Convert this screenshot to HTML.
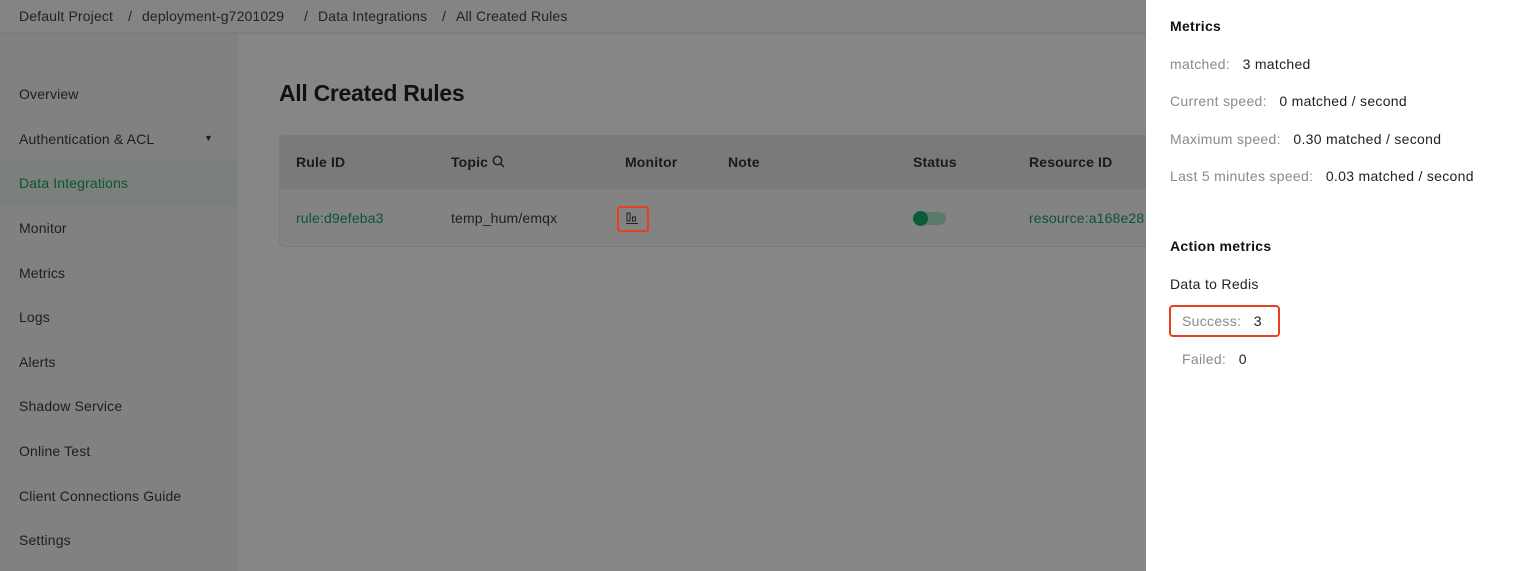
<!DOCTYPE html>
<html><head><meta charset="utf-8"><style>
*{margin:0;padding:0;box-sizing:border-box}
body{width:1536px;height:571px;overflow:hidden;background:#868686;font-family:"Liberation Sans",sans-serif;color:#1e1e1e;position:relative;font-size:14px;letter-spacing:.15px}
.hdr{position:absolute;left:0;top:0;width:1146px;height:33px;background:#848484;border-bottom:1px solid #7c7c7c;box-shadow:0 1px 3px rgba(0,0,0,.08)}
.hdr span{position:absolute;top:8px;font-size:14px;color:#222}
.side{position:absolute;left:0;top:34px;width:238px;height:537px;background:#818181}
.side div{position:absolute;left:19px;font-size:14px;color:#1e1e1e}
.act{position:absolute;left:0;top:127px;width:238px;height:45px;background:#7b807d}
h1{position:absolute;left:279px;top:80px;font-size:23px;font-weight:bold;color:#111;letter-spacing:-.3px}
.tbl{position:absolute;left:279px;top:135px;width:880px;height:112px;border:1px solid #7a7a7a;border-radius:6px;overflow:hidden;background:#838383}
.th{position:absolute;left:0;top:0;width:100%;height:53px;background:#7a7a7a}
.c{position:absolute;font-size:14px}
.b{font-weight:bold;color:#1a1a1a}
.g{color:#0b5434}
.panel{position:absolute;left:1146px;top:0;width:390px;height:571px;background:#fff;letter-spacing:.3px}
.panel div{position:absolute;left:24px;font-size:14px;color:#222}
.l{color:#8a8a8a}
</style></head><body>
<div class="hdr">
<span style="left:19px">Default Project</span>
<span style="left:128px">/</span>
<span style="left:142px">deployment-g7201029</span>
<span style="left:304px">/</span>
<span style="left:318px">Data Integrations</span>
<span style="left:442px">/</span>
<span style="left:456px">All Created Rules</span>
</div>
<div class="side">
<div class="act" style="left:0"></div>
<div style="top:52px">Overview</div>
<div style="top:97px">Authentication &amp; ACL</div>
<div style="left:204px;top:99px;font-size:9px">▼</div>
<div style="top:141px;color:#0b5434">Data Integrations</div>
<div style="top:186px">Monitor</div>
<div style="top:231px">Metrics</div>
<div style="top:275px">Logs</div>
<div style="top:320px">Alerts</div>
<div style="top:364px">Shadow Service</div>
<div style="top:409px">Online Test</div>
<div style="top:454px">Client Connections Guide</div>
<div style="top:498px">Settings</div>
</div>
<h1>All Created Rules</h1>
<div class="tbl">
<div class="th"></div>
<div class="c b" style="left:16px;top:18px">Rule ID</div>
<div class="c b" style="left:171px;top:18px">Topic <svg width="13" height="13" viewBox="0 0 13 13" style="vertical-align:-1px"><circle cx="5.5" cy="5.5" r="4.2" fill="none" stroke="#1a1a1a" stroke-width="1.4"/><path d="M8.6 8.6L12 12" stroke="#1a1a1a" stroke-width="1.5"/></svg></div>
<div class="c b" style="left:345px;top:18px">Monitor</div>
<div class="c b" style="left:448px;top:18px">Note</div>
<div class="c b" style="left:633px;top:18px">Status</div>
<div class="c b" style="left:749px;top:18px">Resource ID</div>
<div class="c g" style="left:16px;top:74px">rule:d9efeba3</div>
<div class="c" style="left:171px;top:74px">temp_hum/emqx</div>
<div style="position:absolute;left:337px;top:70px;width:32px;height:26px;border:2px solid #e8401c;border-radius:3px"></div>
<svg style="position:absolute;left:345px;top:75px" width="14" height="14" viewBox="0 0 14 14"><rect x="2" y="2" width="3" height="8" fill="none" stroke="#222" stroke-width="1"/><rect x="7.5" y="6" width="3" height="4" fill="none" stroke="#222" stroke-width="1"/><path d="M1 12.5H13" stroke="#222" stroke-width="1"/></svg>
<div style="position:absolute;left:633px;top:76px;width:33px;height:13px;border-radius:7px;background:#5a7a6a"></div>
<div style="position:absolute;left:633px;top:75px;width:15px;height:15px;border-radius:50%;background:#0a5c37"></div>
<div class="c g" style="left:749px;top:74px;white-space:nowrap">resource:a168e28</div>
</div>
<div class="panel">
<div style="top:18px;font-weight:bold;color:#111">Metrics</div>
<div style="top:56px"><span class="l">matched:</span>&nbsp;&nbsp; 3 matched</div>
<div style="top:93px"><span class="l">Current speed:</span>&nbsp;&nbsp; 0 matched / second</div>
<div style="top:131px"><span class="l">Maximum speed:</span>&nbsp;&nbsp; 0.30 matched / second</div>
<div style="top:168px"><span class="l">Last 5 minutes speed:</span>&nbsp;&nbsp; 0.03 matched / second</div>
<div style="top:238px;font-weight:bold;color:#111">Action metrics</div>
<div style="top:276px">Data to Redis</div>
<div style="left:23px;top:305px;width:111px;height:32px;border:2px solid #e8401c;border-radius:4px"></div>
<div style="left:36px;top:313px"><span class="l">Success:</span>&nbsp;&nbsp; 3</div>
<div style="left:36px;top:351px"><span class="l">Failed:</span>&nbsp;&nbsp; 0</div>
</div>
</body></html>
